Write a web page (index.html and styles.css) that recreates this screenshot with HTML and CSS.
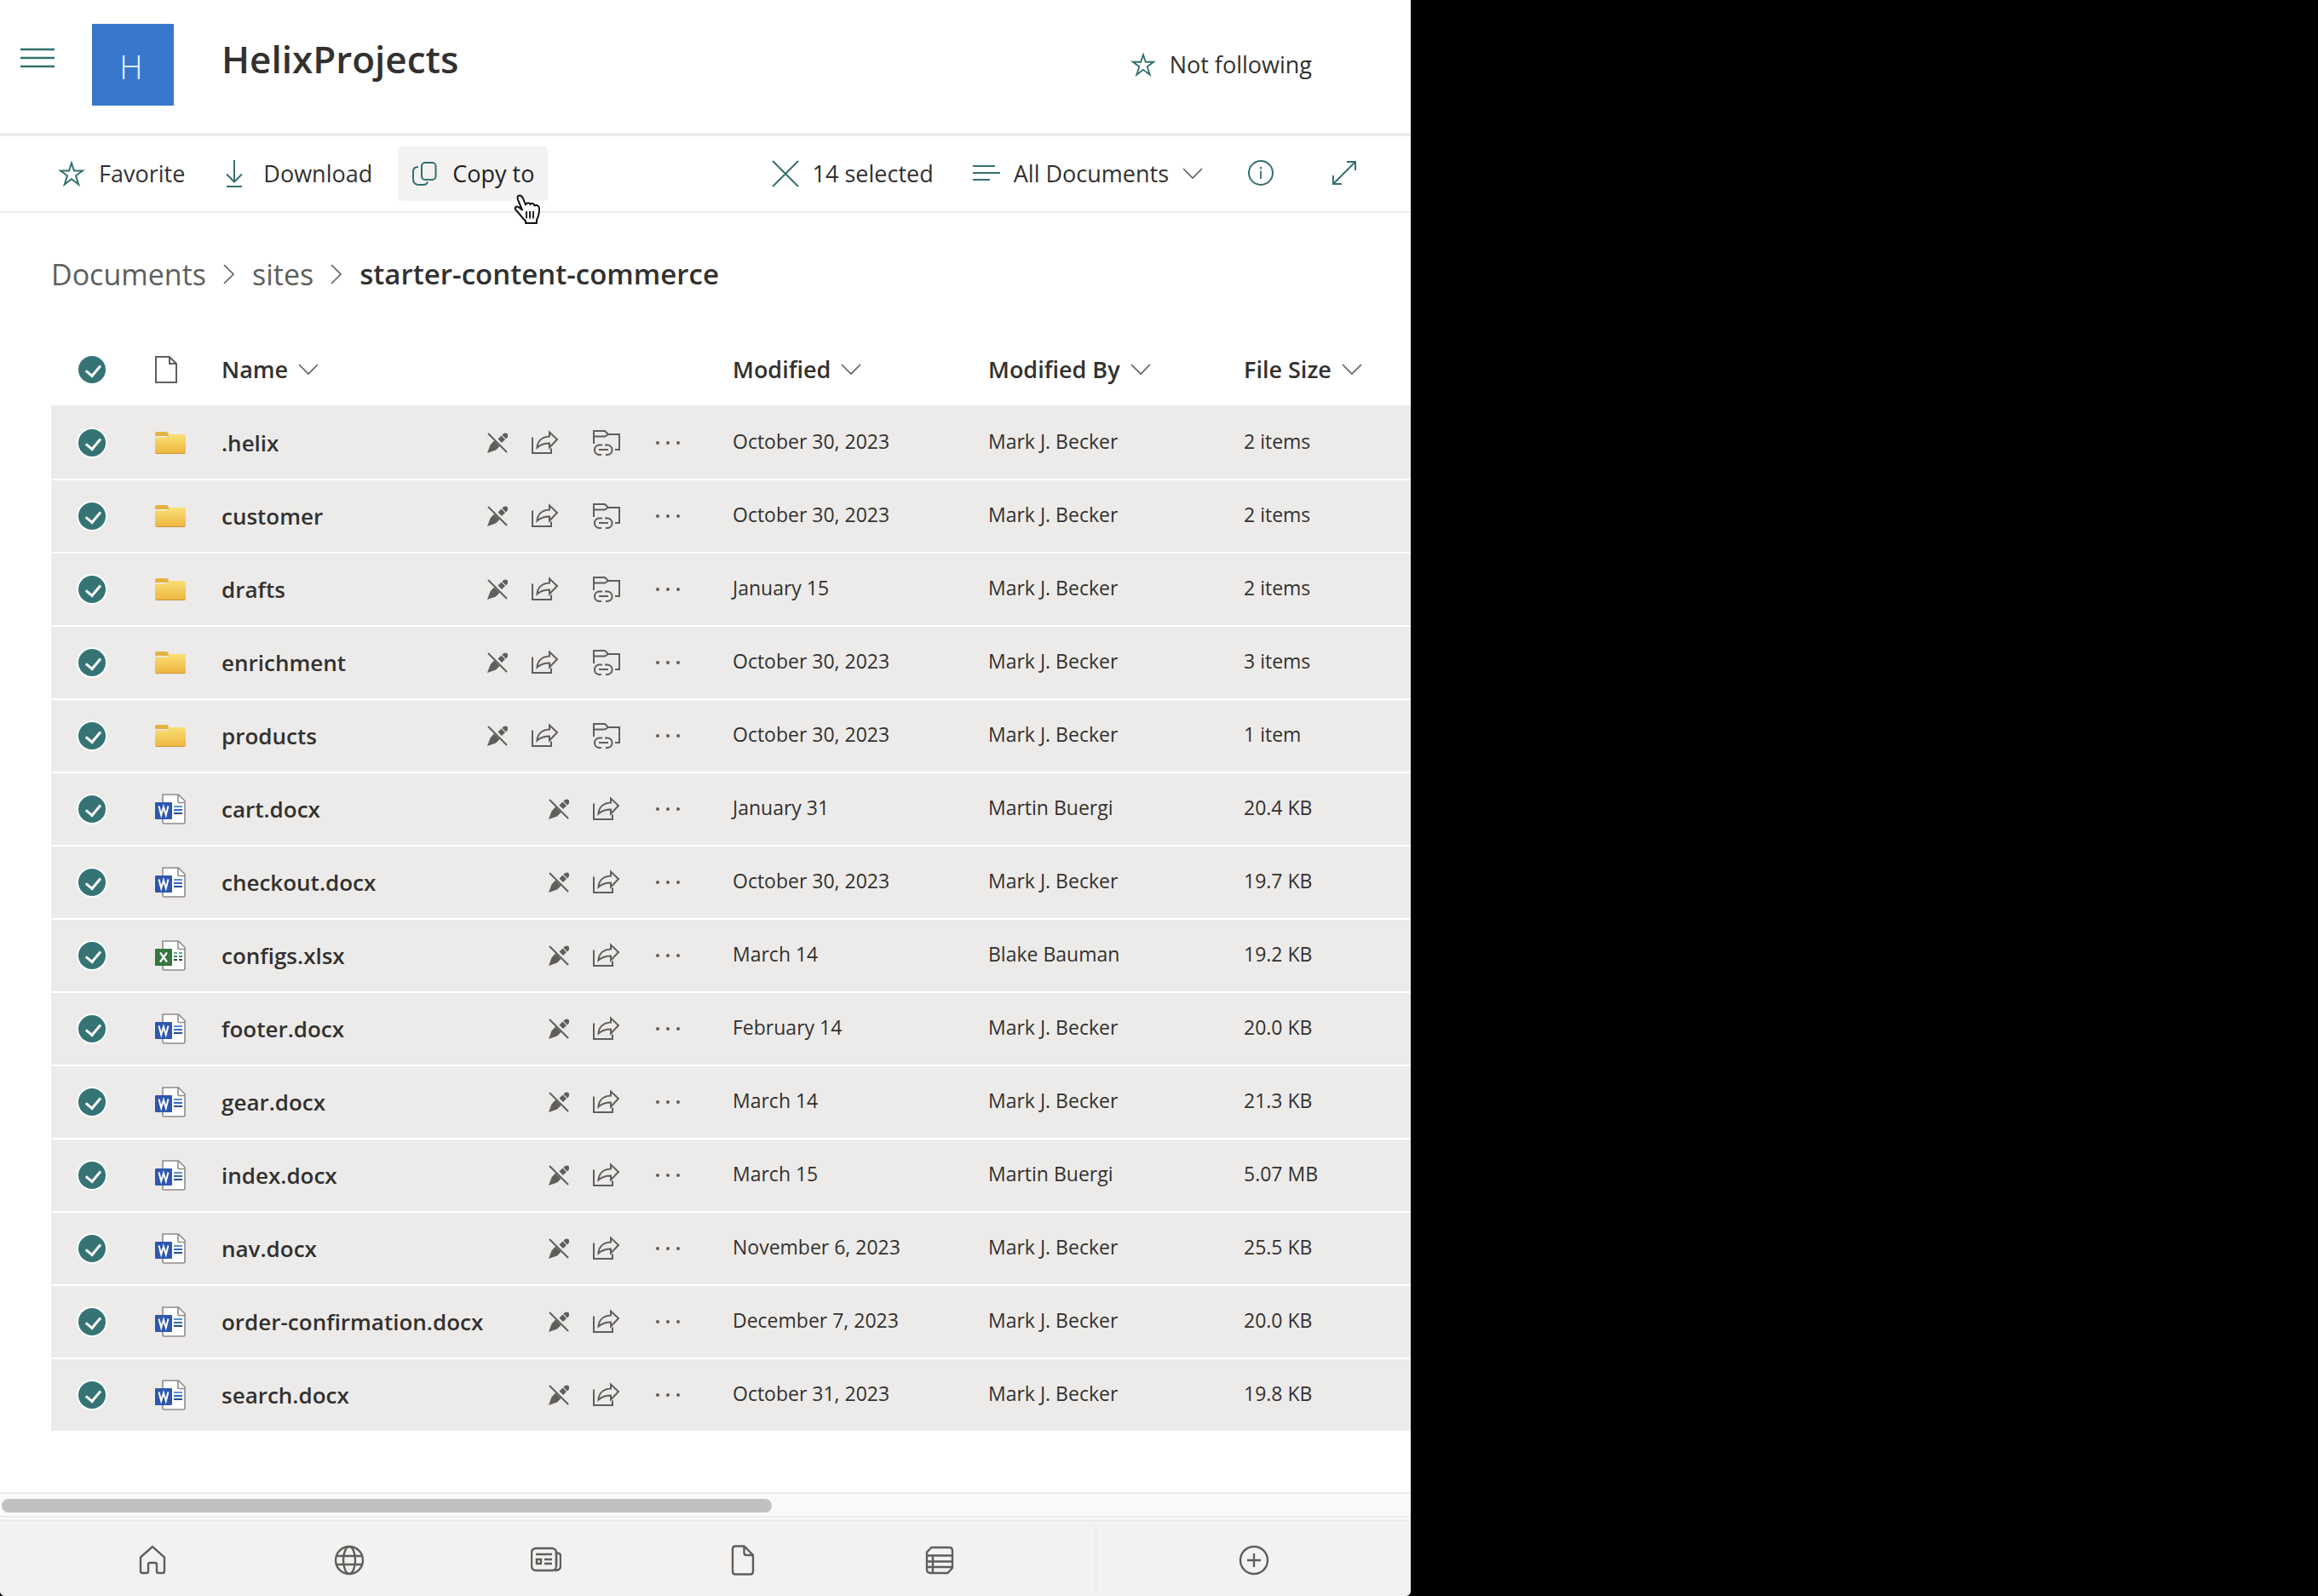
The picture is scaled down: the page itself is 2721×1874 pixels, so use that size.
FILE: index.html
```html
<!DOCTYPE html>
<html lang="en">
<head>
<meta charset="utf-8">
<title>HelixProjects - Documents</title>
<link rel="stylesheet" href="styles.css">
</head>
<body>
<svg class="sprite" aria-hidden="true">
  <symbol id="star" viewBox="0 0 32 32"><path d="M16 3.5 19 12.5H29L21 18.3 24.2 28.5 16 22.2 7.8 28.500 11 18.300 3 12.500H13Z" fill="none" stroke="currentColor" stroke-width="2"/></symbol>
  <symbol id="chevron" viewBox="0 0 24 14"><path d="M1 1 12 12 23 1" fill="none" stroke="currentColor" stroke-width="1.600"/></symbol>
  <symbol id="crumb" viewBox="0 0 14 24"><path d="M1 1 12 12 1 23" fill="none" stroke="currentColor" stroke-width="1.600"/></symbol>
  <symbol id="pen" viewBox="0 0 24 24"><path d="M0 24 3.500 14.500 8 9.500 14.500 16 10 20.500ZM12.500 7.500 16.500 3.500 21 8 17 12ZM17.500 3C19.500-.5 24 0 24 2.500V5L22 7.500Z" fill="currentColor"/><path d="M1 1 23 23" stroke="currentColor" stroke-width="2"/></symbol>
  <symbol id="share" viewBox="0 0 32 30"><path d="M1 8.500V27H23V21.500M21 2.500V7.500C11 8 7 14 6.500 20.500 11 16.500 15 15.500 21 15.500V20.500L30 11Z" fill="none" stroke="currentColor" stroke-width="2"/></symbol>
  <symbol id="folderlink" viewBox="0 0 32 32"><path d="M1 17V2H14L18 6H31V24H26M1 8.500H14L18 6M11 18.500H7A5.800 5.800 0 0 0 7 30H10M14 18.500H17.500A5.800 5.800 0 0 1 17.500 30H15M7 24H18" fill="none" stroke="currentColor" stroke-width="2"/></symbol>
  <symbol id="dots" viewBox="0 0 32 8"><circle cx="4" cy="4" r="2"/><circle cx="16" cy="4" r="2"/><circle cx="28" cy="4" r="2"/></symbol>
  <symbol id="folder" viewBox="0 0 36 28"><path d="M0 3Q0 1 2 1H13Q16 1 16 6H0Z" fill="#e3b341"/><path d="M0 7.500H14L17 4H34Q36 4 36 6V25Q36 27 34 27H2Q0 27 0 25Z" fill="url(#gold)"/><path d="M1 26.500H35" stroke="#c9963c" stroke-width="1"/></symbol>
  <symbol id="word" viewBox="0 0 36 36"><path d="M9 1H27.500L35 8.500V33.500Q35 35 33.500 35H10.500Q9 35 9 33.500Z" fill="#fff" stroke="#8e8c8a" stroke-width="1.600"/><path d="M27 1V9.500Q27 10.500 28 10.500H35" fill="none" stroke="#8e8c8a" stroke-width="1.600"/><path d="M22 15H32" stroke="#5a93d4" stroke-width="2"/><path d="M22 19H32" stroke="#2f6bc0" stroke-width="2"/><path d="M22 23H32" stroke="#24508f" stroke-width="2"/><rect y="10" width="20" height="20" rx="1" fill="#2f57ae"/><path d="M4.500 14.500 7.200 25 10 15.500 12.800 25 15.500 14.500" fill="none" stroke="#fff" stroke-width="2"/></symbol>
  <symbol id="excel" viewBox="0 0 36 36"><path d="M9 1H27.500L35 8.500V33.500Q35 35 33.500 35H10.500Q9 35 9 33.500Z" fill="#fff" stroke="#8e8c8a" stroke-width="1.600"/><path d="M27 1V9.500Q27 10.500 28 10.500H35" fill="none" stroke="#8e8c8a" stroke-width="1.600"/><path d="M22 15H26M28 15H32" stroke="#5fae83" stroke-width="2"/><path d="M22 19H26M28 19H32" stroke="#3a8a5a" stroke-width="2"/><path d="M22 23H26M28 23H32" stroke="#1f4f34" stroke-width="2"/><rect y="10" width="20" height="20" rx="1" fill="#35773f"/><path d="M6 14.500 14 25.500M14 14.500 6 25.500" fill="none" stroke="#fff" stroke-width="2.200"/></symbol>
  <linearGradient id="gold" x1="0" y1="0" x2="0" y2="1"><stop offset="0" stop-color="#f9df76"/><stop offset="1" stop-color="#eeb63f"/></linearGradient>
</svg>

<div class="app">
  <header class="site">
    <button class="menu" aria-label="Menu"><svg width="40" height="24" viewBox="0 0 40 24"><path d="M0 2H40M0 12H40M0 22H40" stroke="#33706f" stroke-width="2.500"/></svg></button>
    <div class="logo" aria-hidden="true">H</div>
    <h1>HelixProjects</h1>
    <button class="follow"><svg class="star-sm"><use href="#star"/></svg>Not following</button>
  </header>

  <div class="toolbar" role="toolbar" aria-label="Commands">
    <button class="cmd favorite"><svg class="i32"><use href="#star"/></svg>Favorite</button>
    <button class="cmd download"><svg width="20" height="32" viewBox="0 0 20 32"><path d="M10 0V25M1 16.500 10 25.500 19 16.500M1 31H19" fill="none" stroke="currentColor" stroke-width="2"/></svg>Download</button>
    <button class="cmd copy"><svg width="30" height="30" viewBox="0 0 30 30"><rect x="12" y="2" width="16.500" height="20" rx="4" fill="none" stroke="currentColor" stroke-width="2"/><path d="M8 7Q2 7 2 12V21Q2 28 9 28H14Q18 28 19 24.500" fill="none" stroke="currentColor" stroke-width="2"/></svg>Copy to
      <svg class="cursor" width="32" height="36" viewBox="0 0 32 36"><path d="M10 18.500 5.500 8C3.500 2.500 5 1.500 7 1.500 9 1.500 10 3 11 5L14 12.500C15 9.500 18.500 9.500 19.500 12 21 10 24 11 24.500 13.500 26.500 12 30 13.500 30 17 30 24 29 27 27 30V34H14V31.500C11 28.500 8.500 26 7 23.500L2.500 18.500C.5 16 3 13.500 5.500 15Z" fill="#fff" stroke="#111" stroke-width="2" stroke-linejoin="round"/><path d="M15 20V28.500M19 20V28.500M23 20V28.500" stroke="#111" stroke-width="1.800"/></svg>
    </button>
    <button class="cmd selected"><svg class="i32" viewBox="0 0 32 32"><path d="M1 1 31 31M31 1 1 31" stroke="currentColor" stroke-width="2"/></svg>14 selected</button>
    <button class="cmd view"><svg width="32" height="20" viewBox="0 0 32 20"><path d="M0 1H26M0 9H32M0 17H20" stroke="currentColor" stroke-width="2"/></svg>All Documents<svg class="chev"><use href="#chevron"/></svg></button>
    <button class="cmd info" aria-label="Details"><svg class="i32" viewBox="0 0 32 32"><circle cx="16" cy="15" r="14" fill="none" stroke="currentColor" stroke-width="2"/><path d="M16 12.500V22M16 8V10.500" stroke="currentColor" stroke-width="1.800"/></svg></button>
    <button class="cmd expand" aria-label="Expand"><svg class="i32" viewBox="0 0 32 32"><path d="M3 28 29 2M19 2H29V12M3 18V28H13" fill="none" stroke="currentColor" stroke-width="2"/></svg></button>
  </div>

  <main>
    <nav class="crumbs" aria-label="Breadcrumb">
      <a href="#">Documents</a><svg class="sep"><use href="#crumb"/></svg><a href="#">sites</a><svg class="sep"><use href="#crumb"/></svg><strong>starter-content-commerce</strong>
    </nav>
    <table>
      <colgroup><col class="c-check"><col class="c-icon"><col class="c-name"><col class="c-mod"><col class="c-by"><col></colgroup>
      <thead><tr>
        <th class="check"><input type="checkbox" checked aria-label="Select all"></th>
        <th class="icon"><svg width="26" height="34" viewBox="0 0 26 34"><path d="M1 2H17L25 10V32H1ZM17 2V10H25" fill="none" stroke="#605e5c" stroke-width="2"/></svg></th>
        <th><button>Name<svg class="chev"><use href="#chevron"/></svg></button></th>
        <th><button>Modified<svg class="chev"><use href="#chevron"/></svg></button></th>
        <th><button>Modified By<svg class="chev"><use href="#chevron"/></svg></button></th>
        <th><button>File Size<svg class="chev"><use href="#chevron"/></svg></button></th>
      </tr></thead>
      <tbody>
        <tr><td class="check"><input type="checkbox" checked aria-label=".helix"></td><td class="icon"><svg class="i-folder"><use href="#folder"/></svg></td><td><div class="name"><a href="#">.helix</a><span class="pair"><svg class="i-pen"><use href="#pen"/></svg><button aria-label="Share"><svg class="i-share"><use href="#share"/></svg></button></span><button aria-label="Add shortcut"><svg class="i32"><use href="#folderlink"/></svg></button><button aria-label="More"><svg class="i-dots"><use href="#dots"/></svg></button></div></td><td class="meta">October 30, 2023</td><td class="meta">Mark J. Becker</td><td class="meta">2 items</td></tr>
        <tr><td class="check"><input type="checkbox" checked aria-label="customer"></td><td class="icon"><svg class="i-folder"><use href="#folder"/></svg></td><td><div class="name"><a href="#">customer</a><span class="pair"><svg class="i-pen"><use href="#pen"/></svg><button aria-label="Share"><svg class="i-share"><use href="#share"/></svg></button></span><button aria-label="Add shortcut"><svg class="i32"><use href="#folderlink"/></svg></button><button aria-label="More"><svg class="i-dots"><use href="#dots"/></svg></button></div></td><td class="meta">October 30, 2023</td><td class="meta">Mark J. Becker</td><td class="meta">2 items</td></tr>
        <tr><td class="check"><input type="checkbox" checked aria-label="drafts"></td><td class="icon"><svg class="i-folder"><use href="#folder"/></svg></td><td><div class="name"><a href="#">drafts</a><span class="pair"><svg class="i-pen"><use href="#pen"/></svg><button aria-label="Share"><svg class="i-share"><use href="#share"/></svg></button></span><button aria-label="Add shortcut"><svg class="i32"><use href="#folderlink"/></svg></button><button aria-label="More"><svg class="i-dots"><use href="#dots"/></svg></button></div></td><td class="meta">January 15</td><td class="meta">Mark J. Becker</td><td class="meta">2 items</td></tr>
        <tr><td class="check"><input type="checkbox" checked aria-label="enrichment"></td><td class="icon"><svg class="i-folder"><use href="#folder"/></svg></td><td><div class="name"><a href="#">enrichment</a><span class="pair"><svg class="i-pen"><use href="#pen"/></svg><button aria-label="Share"><svg class="i-share"><use href="#share"/></svg></button></span><button aria-label="Add shortcut"><svg class="i32"><use href="#folderlink"/></svg></button><button aria-label="More"><svg class="i-dots"><use href="#dots"/></svg></button></div></td><td class="meta">October 30, 2023</td><td class="meta">Mark J. Becker</td><td class="meta">3 items</td></tr>
        <tr><td class="check"><input type="checkbox" checked aria-label="products"></td><td class="icon"><svg class="i-folder"><use href="#folder"/></svg></td><td><div class="name"><a href="#">products</a><span class="pair"><svg class="i-pen"><use href="#pen"/></svg><button aria-label="Share"><svg class="i-share"><use href="#share"/></svg></button></span><button aria-label="Add shortcut"><svg class="i32"><use href="#folderlink"/></svg></button><button aria-label="More"><svg class="i-dots"><use href="#dots"/></svg></button></div></td><td class="meta">October 30, 2023</td><td class="meta">Mark J. Becker</td><td class="meta">1 item</td></tr>
        <tr><td class="check"><input type="checkbox" checked aria-label="cart.docx"></td><td class="icon"><svg class="i-file"><use href="#word"/></svg></td><td><div class="name"><a href="#">cart.docx</a><span class="pair"><svg class="i-pen"><use href="#pen"/></svg><button aria-label="Share"><svg class="i-share"><use href="#share"/></svg></button></span><button aria-label="More"><svg class="i-dots"><use href="#dots"/></svg></button></div></td><td class="meta">January 31</td><td class="meta">Martin Buergi</td><td class="meta">20.4 KB</td></tr>
        <tr><td class="check"><input type="checkbox" checked aria-label="checkout.docx"></td><td class="icon"><svg class="i-file"><use href="#word"/></svg></td><td><div class="name"><a href="#">checkout.docx</a><span class="pair"><svg class="i-pen"><use href="#pen"/></svg><button aria-label="Share"><svg class="i-share"><use href="#share"/></svg></button></span><button aria-label="More"><svg class="i-dots"><use href="#dots"/></svg></button></div></td><td class="meta">October 30, 2023</td><td class="meta">Mark J. Becker</td><td class="meta">19.7 KB</td></tr>
        <tr><td class="check"><input type="checkbox" checked aria-label="configs.xlsx"></td><td class="icon"><svg class="i-file"><use href="#excel"/></svg></td><td><div class="name"><a href="#">configs.xlsx</a><span class="pair"><svg class="i-pen"><use href="#pen"/></svg><button aria-label="Share"><svg class="i-share"><use href="#share"/></svg></button></span><button aria-label="More"><svg class="i-dots"><use href="#dots"/></svg></button></div></td><td class="meta">March 14</td><td class="meta">Blake Bauman</td><td class="meta">19.2 KB</td></tr>
        <tr><td class="check"><input type="checkbox" checked aria-label="footer.docx"></td><td class="icon"><svg class="i-file"><use href="#word"/></svg></td><td><div class="name"><a href="#">footer.docx</a><span class="pair"><svg class="i-pen"><use href="#pen"/></svg><button aria-label="Share"><svg class="i-share"><use href="#share"/></svg></button></span><button aria-label="More"><svg class="i-dots"><use href="#dots"/></svg></button></div></td><td class="meta">February 14</td><td class="meta">Mark J. Becker</td><td class="meta">20.0 KB</td></tr>
        <tr><td class="check"><input type="checkbox" checked aria-label="gear.docx"></td><td class="icon"><svg class="i-file"><use href="#word"/></svg></td><td><div class="name"><a href="#">gear.docx</a><span class="pair"><svg class="i-pen"><use href="#pen"/></svg><button aria-label="Share"><svg class="i-share"><use href="#share"/></svg></button></span><button aria-label="More"><svg class="i-dots"><use href="#dots"/></svg></button></div></td><td class="meta">March 14</td><td class="meta">Mark J. Becker</td><td class="meta">21.3 KB</td></tr>
        <tr><td class="check"><input type="checkbox" checked aria-label="index.docx"></td><td class="icon"><svg class="i-file"><use href="#word"/></svg></td><td><div class="name"><a href="#">index.docx</a><span class="pair"><svg class="i-pen"><use href="#pen"/></svg><button aria-label="Share"><svg class="i-share"><use href="#share"/></svg></button></span><button aria-label="More"><svg class="i-dots"><use href="#dots"/></svg></button></div></td><td class="meta">March 15</td><td class="meta">Martin Buergi</td><td class="meta">5.07 MB</td></tr>
        <tr><td class="check"><input type="checkbox" checked aria-label="nav.docx"></td><td class="icon"><svg class="i-file"><use href="#word"/></svg></td><td><div class="name"><a href="#">nav.docx</a><span class="pair"><svg class="i-pen"><use href="#pen"/></svg><button aria-label="Share"><svg class="i-share"><use href="#share"/></svg></button></span><button aria-label="More"><svg class="i-dots"><use href="#dots"/></svg></button></div></td><td class="meta">November 6, 2023</td><td class="meta">Mark J. Becker</td><td class="meta">25.5 KB</td></tr>
        <tr><td class="check"><input type="checkbox" checked aria-label="order-confirmation.docx"></td><td class="icon"><svg class="i-file"><use href="#word"/></svg></td><td><div class="name"><a href="#">order-confirmation.docx</a><span class="pair"><svg class="i-pen"><use href="#pen"/></svg><button aria-label="Share"><svg class="i-share"><use href="#share"/></svg></button></span><button aria-label="More"><svg class="i-dots"><use href="#dots"/></svg></button></div></td><td class="meta">December 7, 2023</td><td class="meta">Mark J. Becker</td><td class="meta">20.0 KB</td></tr>
        <tr><td class="check"><input type="checkbox" checked aria-label="search.docx"></td><td class="icon"><svg class="i-file"><use href="#word"/></svg></td><td><div class="name"><a href="#">search.docx</a><span class="pair"><svg class="i-pen"><use href="#pen"/></svg><button aria-label="Share"><svg class="i-share"><use href="#share"/></svg></button></span><button aria-label="More"><svg class="i-dots"><use href="#dots"/></svg></button></div></td><td class="meta">October 31, 2023</td><td class="meta">Mark J. Becker</td><td class="meta">19.8 KB</td></tr>
      </tbody>
    </table>
  </main>

  <div class="scrollbar"><div class="thumb"></div></div>

  <nav class="appbar" aria-label="App bar">
    <div class="apps">
      <a href="#" aria-label="Home"><svg class="i36" viewBox="0 0 36 36"><path d="M4 14.500 18 2 32 14.500V31Q32 33 30 33H25Q23 33 23 31V23Q23 21 21 21H15Q13 21 13 23V31Q13 33 11 33H6Q4 33 4 31Z"/></svg></a>
      <a href="#" aria-label="Global"><svg class="i36" viewBox="0 0 36 36"><circle cx="18" cy="18" r="16"/><ellipse cx="18" cy="18" rx="7" ry="16"/><path d="M3 13H33M3 23H33"/></svg></a>
      <a href="#" aria-label="News"><svg class="i36" viewBox="0 0 36 36"><rect x="1" y="4" width="29" height="26" rx="5"/><path d="M30 9.500Q35 9.500 35 13V25Q35 30 28 30M30 9V24M6 11H25M16 17H25M16 22H25M7 17H12V22H7Z"/></svg></a>
      <a href="#" aria-label="Files"><svg class="i36" viewBox="0 0 36 36"><path d="M9 1.500H19.500L30 12V31Q30 34.500 27 34.500H9Q6 34.500 6 31V5Q6 1.500 9 1.500ZM19.500 2V9Q19.500 12 22 12H30"/></svg></a>
      <a href="#" aria-label="Lists"><svg class="i36" viewBox="0 0 36 36"><path d="M8.500 3H29Q33 3 33 7V27L27.500 33H7Q3 33 3 29V8.500ZM3 12.500H33M3 19.500H33M3 26H33M10 12.500V33"/></svg></a>
    </div>
    <div class="create"><button aria-label="Create"><svg class="i36" viewBox="0 0 36 36"><circle cx="18" cy="18" r="16"/><path d="M18 10V26M10 18H26"/></svg></button></div>
  </nav>
</div>
</body>
</html>
```
FILE: styles.css
```css
* { box-sizing: border-box; }
body {
  margin: 0;
  background: #000;
  color: #323130;
  font: 27px/36px "Open Sans", "Noto Sans", sans-serif;
}
button {
  display: inline-flex;
  align-items: center;
  margin: 0;
  padding: 0;
  border: 0;
  background: none;
  color: inherit;
  font: inherit;
  white-space: nowrap;
}
a { color: inherit; text-decoration: none; }
svg { display: block; flex: none; }
.sprite { position: absolute; width: 0; height: 0; }
.i32 { width: 32px; height: 32px; }
.i36 { width: 36px; height: 36px; fill: none; stroke: #605e5c; stroke-width: 2.4; }
.chev { width: 24px; height: 14px; color: #605e5c; }

.app {
  display: flex;
  flex-direction: column;
  max-width: 1656px;
  min-height: 100vh;
  background: #fff;
  border-radius: 0 0 6px 6px;
  overflow: hidden;
}

.site {
  display: flex;
  align-items: flex-start;
  height: 160px;
  padding: 28px 116px 0 24px;
  border-bottom: 4px solid #edebe9;
}
.menu { margin: 28px 44px 0 0; }
.logo {
  width: 96px;
  height: 96px;
  margin-right: 56px;
  padding-right: 4px;
  background: #3878cc;
  color: #e8f6ff;
  font-size: 38px;
  font-weight: 300;
  line-height: 100px;
  text-align: center;
}
h1 { margin: 13px auto 0 0; font-size: 44px; font-weight: 600; line-height: 56px; }
.follow { gap: 16px; margin-top: 30px; }
.follow svg { color: #33706f; }
.star-sm { width: 30px; height: 30px; }

.toolbar {
  display: flex;
  align-items: center;
  height: 90px;
  padding: 0 46px 0 52px;
  border-bottom: 2px solid #edebe9;
}
.cmd { height: 64px; padding: 0 16px; gap: 16px; border-radius: 4px; color: #323130; }
.cmd > svg:first-child { color: #33706f; }
.download { gap: 24px; margin-left: 16px; }
.copy { position: relative; gap: 18px; margin: 0 auto 0 14px; background: #f3f2f1; color: #201f1e; }
.cursor { position: absolute; left: 136px; top: 56px; }
.view { margin-left: 14px; }
.info { margin-left: 20px; }
.expand { margin-left: 34px; }

main { flex: 1; }
.crumbs {
  display: flex;
  align-items: center;
  gap: 20px;
  height: 142px;
  padding: 2px 0 0 60px;
  font-size: 34px;
  line-height: 48px;
}
.crumbs a, .sep { color: #605e5c; }
.crumbs strong { font-size: 33px; font-weight: 600; }
.sep { width: 14px; height: 24px; }

table {
  width: calc(100% - 60px);
  margin-left: 60px;
  border-collapse: separate;
  border-spacing: 0;
  table-layout: fixed;
}
.c-check { width: 96px; }
.c-icon { width: 104px; }
.c-name { width: 600px; }
.c-mod, .c-by { width: 300px; }
th, td { height: 86px; padding: 0; text-align: left; white-space: nowrap; }
th { border-bottom: 2px solid #edebe9; font-weight: 600; }
th button { gap: 12px; }
td { border-bottom: 2px solid #fff; background: #edebe9; }
.meta { padding-bottom: 4px; font-size: 23px; }
.check { text-align: center; line-height: 0; }
.icon { padding-left: 26px; }
input {
  appearance: none;
  display: inline-block;
  width: 32px;
  height: 32px;
  margin: 0;
  border-radius: 50%;
  background: #367374;
  box-shadow: 0 0 0 2px #f6ffff;
}
input::after {
  content: "";
  display: block;
  width: 8px;
  height: 14px;
  margin: 7px 12px;
  border: solid #fff;
  border-width: 0 3px 3px 0;
  transform: rotate(40deg);
}
.name {
  display: flex;
  align-items: center;
  gap: 40px;
  padding-right: 60px;
  color: #605e5c;
}
.name a { margin-right: auto; color: #323130; font-size: 26px; font-weight: 600; }
.pair { display: flex; align-items: center; gap: 28px; }
.i-pen { width: 24px; height: 24px; }
.i-share { width: 32px; height: 30px; }
.i-dots { width: 32px; height: 8px; fill: #605e5c; }
.i-folder { width: 36px; height: 28px; }
.i-file { width: 36px; height: 36px; }

.scrollbar {
  height: 30px;
  padding: 6px 2px;
  border: solid #ebebeb;
  border-width: 2px 0;
  background: #fafafa;
}
.thumb { width: 54.7%; height: 16px; border-radius: 8px; background: #c1c1c1; }

.appbar {
  display: flex;
  height: 90px;
  margin-top: 2px;
  border-top: 2px solid #edebe9;
  background: #f3f2f1;
}
.apps { display: flex; flex: 1; padding: 4px 68px 0 64px; }
.apps a { display: flex; flex: 1; align-items: center; justify-content: center; }
.create {
  display: flex;
  justify-content: center;
  width: 370px;
  margin: 8px 0 2px;
  border-left: 1px solid #e8e6e4;
}
.create button { margin-top: -2px; }
```
